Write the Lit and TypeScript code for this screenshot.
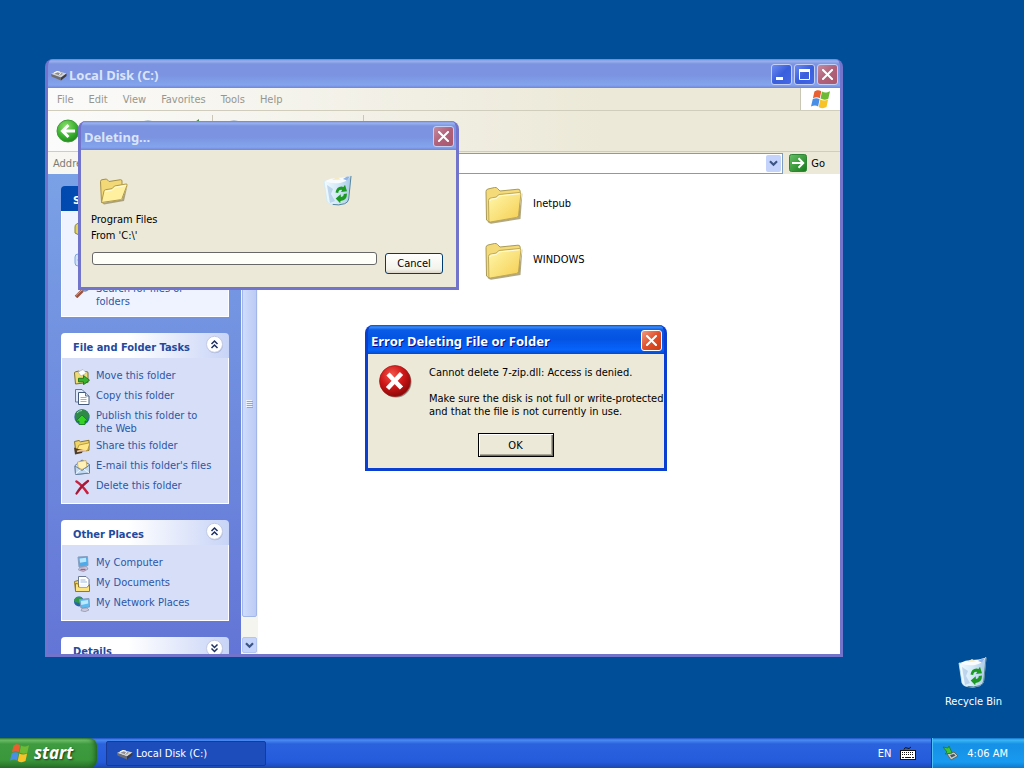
import { LitElement, html, css, svg } from "lit";
import { customElement, property } from "lit/decorators.js";

const base = css`
  *,
  *::before,
  *::after {
    box-sizing: border-box;
  }
  :host {
    font-family: "DejaVu Sans Condensed", "Noto Sans", sans-serif;
    font-size: 11px;
    line-height: 13px;
    color: #000;
  }
  button {
    font: inherit;
    color: inherit;
    padding: 0;
    margin: 0;
  }
  svg {
    display: block;
    flex: none;
  }
`;

/* ---------- pictures ---------- */

const closeX = html`<svg width="11" height="11" viewBox="0 0 11 11"><path d="M1 1l9 9M10 1l-9 9" stroke="#fff" stroke-width="2" stroke-linecap="square" /></svg>`;

const flag = (size: number) => html`<svg width=${size} height=${size} viewBox="0 0 20 20">
  <path d="M3.400 2.600C6 .8 8 1 10.300 2.200L8.800 9.300C6.600 8 4.600 8 1.900 9.400z" fill="#ea5f30" />
  <path d="M11 2.600c2.300 1.400 4.700 1.400 8-.3L17.300 9.700c-2.800 1.500-5.300 1.300-7.800-.1z" fill="#6fba35" />
  <path d="M1.700 10.200C4.400 8.900 6.400 9 8.600 10.200L7.100 17.400C5 16.100 3 16 0 17.500z" fill="#4a8fe6" />
  <path d="M9.300 10.500c2.400 1.400 4.900 1.500 7.800.1l-1.600 7.500c-2.800 1.500-5.300 1.400-7.800-.1z" fill="#f8c326" />
</svg>`;

const drive = html`<svg width="16" height="16" viewBox="0 0 16 16">
  <path d="M0 7L6 4l9.500 2.500L10 10.500z" fill="#d2d2d2" />
  <path d="M0 7l10 3.500v3L.5 9.500z" fill="#6e6e70" />
  <path d="M10 10.500l5.500-4V9L10 13.500z" fill="#3c3c40" />
  <path d="M3.500 6.800L7 5.200l5 1.500-3 1.900z" fill="#8c8c90" />
  <path d="M3 6l3-1.500 3 .7" stroke="#fff" fill="none" />
  <path d="M8 7.500l2-1" stroke="#fff" />
</svg>`;

const folder = (w: number, h: number) => html`<svg width=${w} height=${h} viewBox="0 0 38 38">
  <defs>
    <linearGradient id="f" x1="0" y1="0" x2="1" y2="1"><stop offset="0" stop-color="#fff8ac" /><stop offset="1" stop-color="#f5cd50" /></linearGradient>
  </defs>
  <path d="M2.500 36.500L33 31l4.500-25-2 27L6 37.800z" fill="#8a7a42" opacity=".65" />
  <path d="M1 5.500Q1 3.500 3 3L9.500 1.500q2-.4 3 1L15 5l18-1.800q2-.2 2.200 2L34 30 4 36 1.500 34z" fill="#f4da78" stroke="#a99a56" />
  <path d="M3.500 14.500q0-2 2-2.400l5.500-1L14 8.500l20.500-2q1.500 0 1.400 1.700L33.500 29.500q-.2 1.500-1.800 1.900L5.500 36q-1.500.2-1.600-1.400z" fill="url(#f)" stroke="#b9a352" stroke-width=".9" />
  <path d="M5 15q0-1.500 1.500-1.800l5-.8 3-2.600 20-2" fill="none" stroke="#fffce0" />
</svg>`;

const openFolder = html`<svg width="30" height="29" viewBox="0 0 30 29">
  <path d="M3 26l20-3.500 5.500-14L25 24 5 27.500z" fill="#7d7043" opacity=".6" />
  <path d="M1.500 4.500q0-1.500 1.500-1.800L7.500 2 10 4.500l11.500-1.800q1.500 0 1.500 1.300v15L2.500 25.500z" fill="#f2d876" stroke="#a39048" />
  <path d="M2.500 25.500L5 14q.300-1 1.500-1.300l6.500-1L15.500 9l11.500-2q1.500-.2 1 1.300L23 21.500q-.4 1-1.500 1.200z" fill="#fff0a0" stroke="#b19a48" />
  <path d="M6 14.500l7.500-1.500 2.500-2.700 11-1.800" fill="none" stroke="#fffde0" />
</svg>`;

const bin = html`<svg width="30" height="32" viewBox="0 0 30 32">
  <defs>
    <linearGradient id="b" x1="0" y1="0" x2="1" y2="0"><stop offset="0" stop-color="#f2fcff" /><stop offset=".5" stop-color="#d3e9f8" /><stop offset="1" stop-color="#a9cbe6" /></linearGradient>
  </defs>
  <path d="M1 6q6 1.500 10-.5 8 1.500 17-5l-2.500 24q-.5 3-4 4.300-6 2.500-12 .8Q5 29 4 26z" fill="url(#b)" stroke="#cdeaf5" stroke-width=".8" />
  <path d="M1.500 6.300q6-3.300 12.500-3.300T28 .8q-4 6-11 7.200-8 1-15.500-1.700z" fill="#f9fcff" />
  <path d="M9 5l5-3 4 2.500z" fill="#f5e9c0" />
  <path d="M20 4l4-2.500 3 0-3 4z" fill="#8fb4ea" />
  <path d="M4 10l6 4-2 5 4 7-5 2z" fill="#9dbbe0" opacity=".55" />
  <path d="M28 1l-2.300 23q-.6 3.500-4 4.700-6 2-12 .7" fill="none" stroke="#56839a" />
  <g fill="#1c9a22"><path d="M12.500 17.500q1-6 6-6l2 .4 1.500-2.200 2 6.500-6 .9 1.200-2.200q-3.500-.8-4 3z" /><path d="M24 18.500q0 7-6.500 7.500l-.3 2.200-4.500-4.700 5-4.200.2 2.700q2.800-.3 2.900-3z" /></g>
</svg>`;

const errorIcon = html`<svg width="34" height="34" viewBox="0 0 34 34">
  <defs><radialGradient id="e" cx=".4" cy=".3" r=".75"><stop offset="0" stop-color="#f2574c" /><stop offset=".5" stop-color="#cf1818" /><stop offset="1" stop-color="#860505" /></radialGradient></defs>
  <circle cx="17" cy="17" r="15.500" fill="#55504a" opacity=".6" />
  <circle cx="16" cy="16" r="15.500" fill="url(#e)" stroke="#a81414" stroke-width=".7" />
  <path d="M9 9l13.500 14M22.500 8.500L8.500 23.500" stroke="#fff" stroke-width="4.500" />
</svg>`;

const chevrons = (down: boolean) => html`<svg width="19" height="19" viewBox="0 0 19 19">
  <circle cx="10" cy="10.300" r="8" fill="#8e9cc4" opacity=".55" />
  <circle cx="9.500" cy="9.300" r="8" fill="#fff" stroke="#c3cbe4" />
  <path d=${down ? "M6.500 5.500l3 3 3-3M6.500 9.500l3 3 3-3" : "M6.500 9l3-3 3 3M6.500 13l3-3 3 3"} fill="none" stroke="#1c2f62" stroke-width="1.500" />
</svg>`;

const caret = html`<svg width="9" height="7" viewBox="0 0 9 7"><path d="M1 1.200l3.500 3.500L8 1.200" fill="none" stroke="#3d5585" stroke-width="2.200" /></svg>`;

const backIcon = html`<svg width="24" height="24" viewBox="0 0 24 24">
  <defs><radialGradient id="g" cx=".4" cy=".3" r=".8"><stop offset="0" stop-color="#8fe06e" /><stop offset=".6" stop-color="#35ae2c" /><stop offset="1" stop-color="#1b7c1a" /></radialGradient></defs>
  <circle cx="12" cy="12" r="11" fill="url(#g)" stroke="#3f9c35" />
  <path d="M19 12H7M12.500 6L6.500 12l6 6" fill="none" stroke="#fff" stroke-width="3" />
</svg>`;

const goIcon = html`<svg width="18" height="18" viewBox="0 0 18 18">
  <defs><linearGradient id="o" x1="0" y1="0" x2="1" y2="1"><stop offset="0" stop-color="#67c065" /><stop offset="1" stop-color="#147a1a" /></linearGradient></defs>
  <rect x=".5" y=".5" width="17" height="17" rx="2" fill="url(#o)" stroke="#2f8435" />
  <path d="M3 9h11M9.500 4.300L14.200 9l-4.700 4.700" fill="none" stroke="#fff" stroke-width="2" />
</svg>`;

const glyphs: Record<string, unknown> = {
  drive: svg`<path d="M1 5q0-4 6-4l8 2v10l-6 2-8-4z" fill="#e3d35a" stroke="#8b8434"/>`,
  programs: svg`<rect x="1" y="2" width="13" height="12" rx="3" fill="#cfe2f8" stroke="#7ea6dd"/><circle cx="7" cy="8" r="3" fill="#fff" stroke="#7ea6dd"/>`,
  search: svg`<circle cx="11" cy="5" r="4" fill="#d6e8fb" stroke="#7388b8" stroke-width="1.500"/><path d="M8.500 8.500L2 15" stroke="#9c5340" stroke-width="3.500"/><path d="M8.500 7.500L2 13.500" stroke="#d9a48c"/>`,
  move: svg`<path d="M.5 4q0-1 1-1.200L5 2l1.500 1.500 6-1q1.500 0 1.500 1.500v9.500L1.500 15z" fill="#efdb78" stroke="#7d6e33"/><path d="M4 3l5-2.500L12.500 4 7 7z" fill="#fff" stroke="#999" stroke-width=".5"/><path d="M4.500 9.300h5V6.500L15.500 11.200l-6 4.500v-2.800h-5z" fill="#39b32f" stroke="#1c741b" stroke-width=".9"/>`,
  copy: svg`<path d="M1.500.5H8L10.500 3v10h-9z" fill="#dde9f8" stroke="#61799c"/><path d="M4.500 3.500h7l3.500 3.500v8.500H4.500z" fill="#fff" stroke="#43587a"/><path d="M11.500 3.500V7H15" fill="#c8d8ee" stroke="#43587a" stroke-width=".8"/><path d="M6.500 8.500h6M6.500 10.500h6M6.500 12.500h6" stroke="#8fb1dc"/>`,
  web: svg`<circle cx="8" cy="8" r="7.700" fill="#2f6f9a"/><path d="M1 5q3-5 8-4.500 5 1 6.500 6L12 11 8 7l-6 3z" fill="#2f8a4a"/><path d="M3 4q2-2.500 5-2.500" stroke="#9fd7b8" fill="none"/><path d="M8 6l6 6h-3v3.500H5V12H2z" fill="#34d127" stroke="#157c1b" stroke-width=".8"/>`,
  share: svg`<path d="M.5 2.500L5 1.500l1.500 1.300 8.500-1.500v10L2 13.500z" fill="#f0d468" stroke="#86722f"/><path d="M3 11l2-5 11-2.300-2.500 8z" fill="#ffe788" stroke="#a48c3c" stroke-width=".8"/><path d="M0 8.500l4 1.500 5 1-1 3-7 1.500z" fill="#4f3b26"/><path d="M3 12.500q4-1.500 9-.5" stroke="#ecc49b" stroke-width="1.800" fill="none"/>`,
  mail: svg`<path d="M1 6.500L8 1l7.500 4.500V14L1.500 15.500z" fill="#d3e2f4" stroke="#5f7898"/><path d="M3.500 3l8.500-1.500 1 6.500-5 2.500-4-2z" fill="#fff1b8" stroke="#c9a64a" stroke-width=".8"/><path d="M1 7l7 4.500L15.500 6v8L1.500 15.500z" fill="#c3daf1" stroke="#5f7898" stroke-width=".9"/><path d="M1.500 15l5-4.500M15 14l-5-4" stroke="#fff" stroke-width=".9"/>`,
  delete: svg`<path d="M2.500 2.500q5 3 11 11.500" fill="none" stroke="#c8203f" stroke-width="2.600" stroke-linecap="round"/><path d="M14 2Q7 7 2.500 14.500" fill="none" stroke="#a81836" stroke-width="2.200" stroke-linecap="round"/>`,
  computer: svg`<path d="M4 1l9.500-.5.500 9-9 1.500z" fill="#4faae8" stroke="#8b9ec0"/><path d="M5.500 2.500l6.500-.7.300 4-6.300 1z" fill="#b8e6fd"/><path d="M5.500 11.500l7-1 1.500 2.500-4.500 2.500-5-1.500z" fill="#c8cbe2" stroke="#9090ac" stroke-width=".8"/><path d="M6.500 13.500h5" stroke="#c05470" stroke-width="1.500"/>`,
  documents: svg`<path d="M.5 5.500l3.500-1 1.500 1.500V15H1.500z" fill="#f0d35c" stroke="#94792a"/><path d="M4.500.5h7.500L15 3.500V13H4.500z" fill="#fff" stroke="#6f7b95"/><path d="M6.500 4h5M6.500 6h6.500" stroke="#9db9e0"/><path d="M1.500 15.500V7.500l3 .5v3h9l2-2.500v7z" fill="#fbe380" stroke="#94792a"/><path d="M5.500 8h7.500v3H5.500z" fill="#f4f7fc"/>`,
  network: svg`<circle cx="5" cy="5.500" r="5" fill="#2566a8"/><path d="M0 4q2-4 7-3l1.500 2.500L5 7 1 6z" fill="#2f9a4a"/><path d="M5.500 3.500L15 2.500l.5 8.500-8.500 1z" fill="#5cbcf1" stroke="#8499bb"/><path d="M7 5l7-.9.200 3.500-7 1.300z" fill="#bce9fe"/><path d="M8 12.500l5-.5 2 2-4 1.700-4-1z" fill="#c9cadf" stroke="#8f90a8" stroke-width=".7"/>`,
};
const glyph = (name: string) => html`<svg width="16" height="16" viewBox="0 0 16 16">${glyphs[name]}</svg>`;

/* ---------- window frame ---------- */

@customElement("xp-window")
class XpWindow extends LitElement {
  @property() heading = "";
  @property({ type: Boolean, reflect: true }) active = false;
  @property({ type: Boolean }) full = false;
  static styles = [
    base,
    css`
      :host {
        display: flex;
        flex-direction: column;
        border: solid #7274cc;
        border-width: 0 3px 3px;
        border-radius: 8px 8px 0 0;
        overflow: hidden;
        background: #7274cc;
      }
      :host([active]) {
        border-color: #0a3fd0;
        background: #0a3fd0;
      }
      .bar {
        flex: none;
        height: 29px;
        margin: 0 -3px;
        padding: 2px 5px 0 6px;
        display: flex;
        align-items: center;
        gap: 2px;
        color: #dae4f9;
        background: linear-gradient(#6d7fd4 0, #9ab2ee 2px, #7c94e0 5px, #7b93e0 16px, #84a5ee 26px, #7085da 29px);
      }
      :host([active]) .bar {
        color: #fff;
        background: linear-gradient(#0a48c8 0, #3a8cf8 2px, #0a5be8 5px, #0453e2 14px, #0664fc 25px, #0448cc 29px);
        text-shadow: 1px 1px #0f1089;
      }
      h2 {
        margin: 0;
        flex: 1;
        min-width: 0;
        font: bold 13px/18px "Noto Sans", sans-serif;
        white-space: nowrap;
      }
      .ctl {
        flex: none;
        width: 21px;
        height: 21px;
        display: grid;
        place-items: center;
        border: 1px solid #c3cff4;
        border-radius: 3px;
        background: linear-gradient(135deg, #6d8cf0, #3a5fdc 50%, #4467e4);
      }
      .close {
        background: linear-gradient(135deg, #c48b9f, #b0617a 50%, #a9586c);
      }
      :host([active]) .close {
        border-color: #fff;
        background: linear-gradient(135deg, #f09a80, #e0502c 50%, #c83c14);
      }
      .body {
        flex: 1;
        min-height: 0;
        display: flex;
        flex-direction: column;
        background: #ece9d8;
      }
    `,
  ];
  render() {
    return html`<div class="bar">
        <slot name="icon"></slot>
        <h2>${this.heading}</h2>
        ${this.full
          ? html`<button class="ctl" aria-label="Minimize"><svg width="13" height="13" viewBox="0 0 13 13"><path d="M1 9h7v3H1z" fill="#fff" /></svg></button>
              <button class="ctl" aria-label="Maximize"><svg width="13" height="13" viewBox="0 0 13 13"><path d="M1.500 2v9.500h10V2" fill="none" stroke="#fff" /><path d="M1 1h11v3H1z" fill="#fff" /></svg></button>`
          : ""}
        <button class="ctl close" aria-label="Close">${closeX}</button>
      </div>
      <div class="body"><slot></slot></div>`;
  }
}

/* ---------- side pane ---------- */

@customElement("task-group")
class TaskGroup extends LitElement {
  @property() heading = "";
  @property({ type: Boolean, reflect: true }) primary = false;
  @property({ type: Boolean }) closed = false;
  @property({ attribute: false }) items: [string, string][] = [];
  static styles = [
    base,
    css`
      :host {
        display: block;
        flex: none;
      }
      header {
        height: 25px;
        padding: 0 5px 0 12px;
        display: flex;
        align-items: center;
        justify-content: space-between;
        border-radius: 4px 4px 0 0;
        background: linear-gradient(90deg, #fff 40%, #c8d4f7);
        color: #1f4a9e;
      }
      :host([primary]) header {
        background: linear-gradient(90deg, #0049ae, #2a5fca);
        color: #fff;
      }
      h3 {
        margin: 0;
        padding-top: 3px;
        font-size: 11px;
        line-height: 15px;
        white-space: nowrap;
      }
      .toggle {
        border: 0;
        background: none;
        margin-bottom: 3px;
      }
      ul {
        list-style: none;
        margin: 0;
        padding: 11px 16px 8px 12px;
        display: flex;
        flex-direction: column;
        gap: 4px;
        border: solid #fff;
        border-width: 0 1px 1px;
        background: #d6dff7;
      }
      :host([primary]) ul {
        background: #eff3ff;
      }
      a {
        display: flex;
        gap: 6px;
        min-height: 16px;
        color: #2c56a8;
        text-decoration: none;
      }
    `,
  ];
  render() {
    return html`<header>
        <h3>${this.heading}</h3>
        <button class="toggle" aria-label=${this.closed ? "Expand" : "Collapse"}>${chevrons(this.closed)}</button>
      </header>
      ${this.closed ? "" : html`<ul>${this.items.map(([icon, label]) => html`<li><a href="#">${glyph(icon)}<span>${label}</span></a></li>`)}</ul>`}`;
  }
}

/* ---------- desktop ---------- */

@customElement("app-root")
class AppRoot extends LitElement {
  static styles = [
    base,
    css`
      :host {
        display: flex;
        flex-direction: column;
        height: 100vh;
        overflow: hidden;
        background: #004e98;
      }
      .desk {
        position: relative;
        flex: 1;
        min-height: 0;
      }
      .explorer,
      .deleting,
      .error,
      .recycle {
        position: absolute;
      }
      .explorer {
        inset: 59px 181px 81px 45px;
      }
      .deleting {
        left: 78px;
        top: 121px;
        width: 381px;
      }
      .error {
        left: 365px;
        top: 325px;
        width: 302px;
      }
      .recycle {
        right: 22px;
        bottom: 30px;
        display: flex;
        flex-direction: column;
        align-items: center;
        gap: 6px;
        color: #fff;
        text-decoration: none;
      }

      .menurow {
        flex: none;
        display: flex;
        height: 23px;
        border-bottom: 1px solid #d0cdbc;
        background: linear-gradient(90deg, #fbfbfb, #ece9d8 70%);
      }
      .menu {
        flex: 1;
        display: flex;
        align-items: center;
        gap: 15px;
        padding: 0 9px;
      }
      .menu button {
        border: 0;
        background: none;
        color: #97968e;
      }
      .throbber {
        width: 40px;
        display: grid;
        place-items: center;
        background: #fff;
        border-left: 1px solid #c9c6b6;
      }
      .tools {
        flex: none;
        height: 41px;
        padding: 0 8px;
        display: flex;
        align-items: center;
        gap: 4px;
        border-bottom: 1px solid #d0cdbc;
        background: linear-gradient(90deg, #fbfbfb, #ece9d8 70%);
      }
      .tools button {
        border: 0;
        background: none;
      }
      .address {
        flex: none;
        height: 22px;
        padding: 0 15px 0 5px;
        display: flex;
        align-items: center;
        gap: 6px;
        color: #7c7b74;
        background: linear-gradient(90deg, #f8f7f2, #ece9d8 60%);
      }
      .combo {
        flex: 1;
        height: 21px;
        display: flex;
        padding: 1px;
        border: 1px solid #7f9db9;
        background: #fff;
      }
      .combo input {
        flex: 1;
        min-width: 0;
        border: 0;
        padding: 0 4px;
        font: inherit;
      }
      .drop {
        width: 15px;
        display: grid;
        place-items: center;
        border: 0;
        border-radius: 2px;
        background: #c3d3fb;
      }
      .go {
        display: flex;
        align-items: center;
        gap: 4px;
        border: 0;
        background: none;
        color: #000;
      }
      .panes {
        flex: 1;
        min-height: 0;
        display: flex;
        background: #fff;
      }
      .side {
        width: 193px;
        flex: none;
        padding: 12px 12px 0 13px;
        display: flex;
        flex-direction: column;
        gap: 16px;
        overflow: hidden;
        background: linear-gradient(#7aa1e6, #6375d6);
      }
      .scroll {
        flex: none;
        width: 17px;
        display: flex;
        flex-direction: column;
        padding: 0 1px 1px;
        background: #f5f5f0;
      }
      .arrow {
        flex: none;
        height: 16px;
        display: grid;
        place-items: center;
        border: 1px solid #b4c5f0;
        border-radius: 2px;
        background: #c5d4fa;
      }
      .thumb {
        flex: 1;
        display: grid;
        place-items: center;
        margin-bottom: 20px;
        border: 1px solid #a3b6e8;
        border-radius: 2px;
        background: linear-gradient(90deg, #cfdcfc, #bccbf5);
      }
      .files {
        flex: 1;
        align-content: start;
        display: grid;
        grid-template-columns: 217px minmax(0, 1fr);
        gap: 18px 0;
        padding: 12px 10px;
      }
      .tile {
        grid-column: 2;
        justify-self: start;
        display: flex;
        align-items: flex-start;
        gap: 10px;
        height: 38px;
        color: #000;
        line-height: 35px;
        text-decoration: none;
      }

      .progress {
        padding: 25px 13px 13px 10px;
      }
      .icons {
        display: grid;
        grid-template-columns: 224px 1fr;
        align-items: center;
        padding-left: 8px;
      }
      .names {
        margin: 5px 0 4px;
        line-height: 16px;
      }
      .foot {
        display: flex;
        align-items: flex-start;
        gap: 8px;
      }
      .track {
        flex: 1;
        height: 13px;
        margin: 4px 0 0 1px;
        border: 1px solid #686868;
        border-radius: 3px;
        background: #fffffa;
      }
      .cancel {
        width: 58px;
        height: 21px;
        margin-top: 5px;
        border: 1px solid #003c74;
        border-radius: 3px;
        background: linear-gradient(#fff, #f3f2ea 80%, #dbd5c8);
      }

      .alert {
        display: grid;
        grid-template-columns: 50px 1fr;
        padding: 11px 0 11px 11px;
      }
      .message {
        padding-top: 1px;
      }
      .message p {
        margin: 0 0 13px;
        white-space: nowrap;
      }
      .ok {
        justify-self: center;
        grid-column: 1 / -1;
        width: 76px;
        height: 24px;
        margin: 2px 12px 0 0;
        border: 1px solid #000;
        background: #ece9d8;
        box-shadow: inset 1px 1px #fff, inset -1px -1px #716f64, inset -2px -2px #aca899;
      }

      .taskbar {
        flex: none;
        height: 30px;
        display: flex;
        background: linear-gradient(#1f4fc0 0, #4a8cf4 2px, #2a62de 6px, #245bdb 24px, #1b48b0 30px);
        color: #fff;
      }
      .start {
        width: 97px;
        display: flex;
        align-items: center;
        gap: 4px;
        padding: 0 0 0 10px;
        border: 0;
        border-radius: 0 8px 8px 0;
        background: linear-gradient(#2f7a32 0, #6cc06a 2px, #3f9b40 6px, #3a973a 22px, #276f29 30px);
        box-shadow: inset -4px 0 5px -2px #1f5f22;
        font: italic bold 17px/24px "Noto Sans", sans-serif;
        text-shadow: 1px 1px 2px #123d12;
      }
      .task {
        width: 160px;
        margin: 3px 0 2px 9px;
        padding: 0 10px;
        display: flex;
        align-items: center;
        gap: 3px;
        border: 1px solid #163a96;
        border-radius: 2px;
        background: #1d4dbb;
      }
      .lang {
        margin-left: auto;
        padding: 0 15px 0 12px;
        display: flex;
        align-items: center;
        gap: 9px;
      }
      .tray {
        display: flex;
        align-items: center;
        gap: 9px;
        padding: 0 16px 0 10px;
        border-left: 1px solid #0b3f90;
        box-shadow: inset 1px 0 #4cc3f8;
        background: linear-gradient(#1070c8 0, #3cb8f8 2px, #1590e6 6px, #189af0 24px, #1078c8 30px);
      }
    `,
  ];

  render() {
    return html`
      <main class="desk">
        <xp-window class="explorer" heading="Local Disk (C:)" full>
          <span slot="icon">${drive}</span>
          <div class="menurow">
            <nav class="menu">${["File", "Edit", "View", "Favorites", "Tools", "Help"].map((m) => html`<button>${m}</button>`)}</nav>
            <div class="throbber">${flag(20)}</div>
          </div>
          <div class="tools">
            <button aria-label="Back">${backIcon}</button>
            <svg width="290" height="40" viewBox="0 0 290 40">
              <circle cx="64" cy="18" r="9" fill="#b9c4cf" />
              <path d="M108 13l7-5v12z" fill="#4a8f4c" />
              <path d="M128.500 4v32M279.500 4v32" stroke="#c9c6b6" />
              <circle cx="150" cy="18" r="9" fill="#b9c4cf" />
            </svg>
          </div>
          <div class="address">
            <label for="addr">Address</label>
            <div class="combo"><input id="addr" /><button class="drop" aria-label="Show list">${caret}</button></div>
            <button class="go">${goIcon}Go</button>
          </div>
          <div class="panes">
            <aside class="side">
              <task-group
                primary
                heading="System Tasks"
                .items=${[["drive", "Hide the contents of this drive"], ["programs", "Add or remove programs"], ["search", "Search for files or folders"]]}
              ></task-group>
              <task-group
                heading="File and Folder Tasks"
                .items=${[["move", "Move this folder"], ["copy", "Copy this folder"], ["web", "Publish this folder to the Web"], ["share", "Share this folder"], ["mail", "E-mail this folder's files"], ["delete", "Delete this folder"]]}
              ></task-group>
              <task-group
                heading="Other Places"
                .items=${[["computer", "My Computer"], ["documents", "My Documents"], ["network", "My Network Places"]]}
              ></task-group>
              <task-group heading="Details" closed></task-group>
            </aside>
            <div class="scroll">
              <div class="arrow"></div>
              <div class="thumb"><svg width="7" height="8" viewBox="0 0 7 8"><path d="M0 .5h6M0 2.500h6M0 4.500h6M0 6.500h6" stroke="#eef4fe" /><path d="M1 1.500h6M1 3.500h6M1 5.500h6M1 7.500h6" stroke="#8ba5e3" /></svg></div>
              <div class="arrow">${caret}</div>
            </div>
            <div class="files">
              <a class="tile" href="#">${folder(38, 38)}<span>Inetpub</span></a>
              <a class="tile" href="#">${folder(38, 38)}<span>WINDOWS</span></a>
            </div>
          </div>
        </xp-window>

        <xp-window class="deleting" heading="Deleting...">
          <div class="progress">
            <div class="icons">${openFolder}${bin}</div>
            <div class="names">Program Files<br />From 'C:\\'</div>
            <div class="foot">
              <div class="track" role="progressbar" aria-label="Deleting"></div>
              <button class="cancel">Cancel</button>
            </div>
          </div>
        </xp-window>

        <xp-window class="error" heading="Error Deleting File or Folder" active>
          <div class="alert">
            ${errorIcon}
            <div class="message">
              <p>Cannot delete 7-zip.dll: Access is denied.</p>
              <p>Make sure the disk is not full or write-protected<br />and that the file is not currently in use.</p>
            </div>
            <button class="ok">OK</button>
          </div>
        </xp-window>

        <a class="recycle" href="#">${bin}<span>Recycle Bin</span></a>
      </main>

      <footer class="taskbar">
        <button class="start">${flag(20)}start</button>
        <button class="task">${drive}Local Disk (C:)</button>
        <div class="lang">
          <span>EN</span>
          <svg width="16" height="14" viewBox="0 0 16 14">
            <path d="M4 3.500q1-3 3-1.500t4-1" fill="none" stroke="#111" />
            <rect x=".5" y="4.500" width="15" height="9" fill="#fff" stroke="#111" />
            <path d="M2 6.500h12M2 8.500h12" stroke="#111" stroke-dasharray="1 1" />
            <path d="M2 11.500h2M5 11.500h6M12 11.500h2" stroke="#111" />
          </svg>
        </div>
        <div class="tray">
          <svg width="16" height="16" viewBox="0 0 16 16">
            <path d="M5 9l7-2 4 4-7 4z" fill="#c9ccc8" stroke="#5b6a66" />
            <path d="M8 10l4-1 1.500 1.500-4 2z" fill="#44565c" />
            <path d="M1 2l5 1 1-2 3 7-7 1 2-2z" fill="#3fc43a" stroke="#1b7a35" stroke-width=".8" />
          </svg>
          <time>4:06 AM</time>
        </div>
      </footer>
    `;
  }
}
